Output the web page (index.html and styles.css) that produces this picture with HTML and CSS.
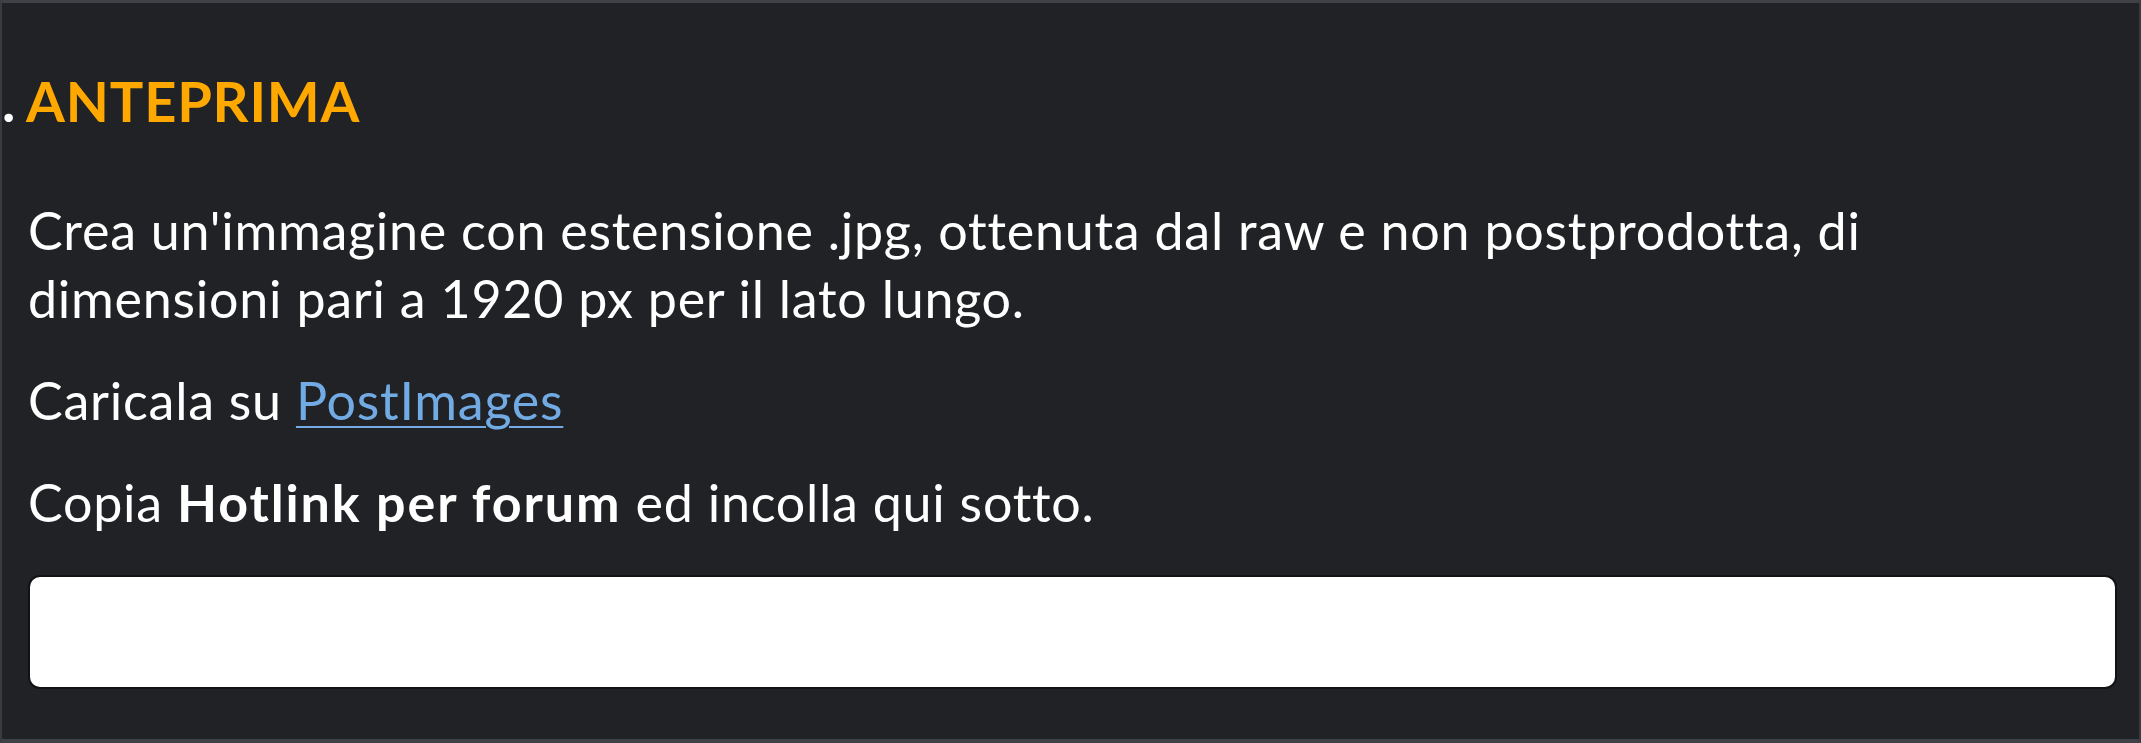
FILE: index.html
```html
<!DOCTYPE html>
<html lang="it">
<head>
<meta charset="utf-8">
<title>Anteprima</title>
<link rel="stylesheet" href="styles.css">
</head>
<body>
<section class="panel">
  <h2 class="step"><span class="step-num">.</span>ANTEPRIMA</h2>
  <p class="text">Crea un'immagine con estensione .jpg, ottenuta dal raw e non postprodotta, di<br>dimensioni pari a 1920 px per il lato lungo.</p>
  <p class="text">Caricala su <a class="link" href="#">PostImages</a></p>
  <p class="text">Copia <strong>Hotlink per forum</strong> ed incolla qui sotto.</p>
  <input class="field" type="text" aria-label="Hotlink">
</section>
</body>
</html>
```
FILE: styles.css
```css
html, body {
  margin: 0;
  padding: 0;
  background: #212226;
}

.panel {
  box-sizing: border-box;
  width: 2141px;
  height: 743px;
  overflow: hidden;
  background: #212226;
  border-top: 3px solid #404146;
  border-left: 2px solid #3a3b40;
  border-right: 2px solid #3a3b40;
  border-bottom: 4px solid #404146;
  padding: 64px 22px 0 26px;
  font-family: Lato, "Noto Sans", sans-serif;
  color: #ffffff;
}

.step {
  margin: 0 0 61px -26px;
  font-size: 56px;
  line-height: 68px;
  font-weight: 700;
  letter-spacing: 0.8px;
  color: #ffa900;
  white-space: nowrap;
}

.step-num {
  color: #ffffff;
  margin-right: 10px;
}

.text {
  margin: 0 0 34px 0;
  font-size: 52px;
  line-height: 68px;
  letter-spacing: 0.75px;
}

.text strong {
  font-weight: 700;
  letter-spacing: 1.9px;
}

.link {
  color: #72abe3;
  text-decoration: underline;
  text-underline-offset: 6px;
  text-decoration-thickness: 2px;
}

.field {
  display: block;
  box-sizing: border-box;
  width: 2089px;
  height: 114px;
  margin-top: 39px;
  background: #ffffff;
  border: 2px solid #111215;
  border-radius: 12px;
  outline: none;
}
```
